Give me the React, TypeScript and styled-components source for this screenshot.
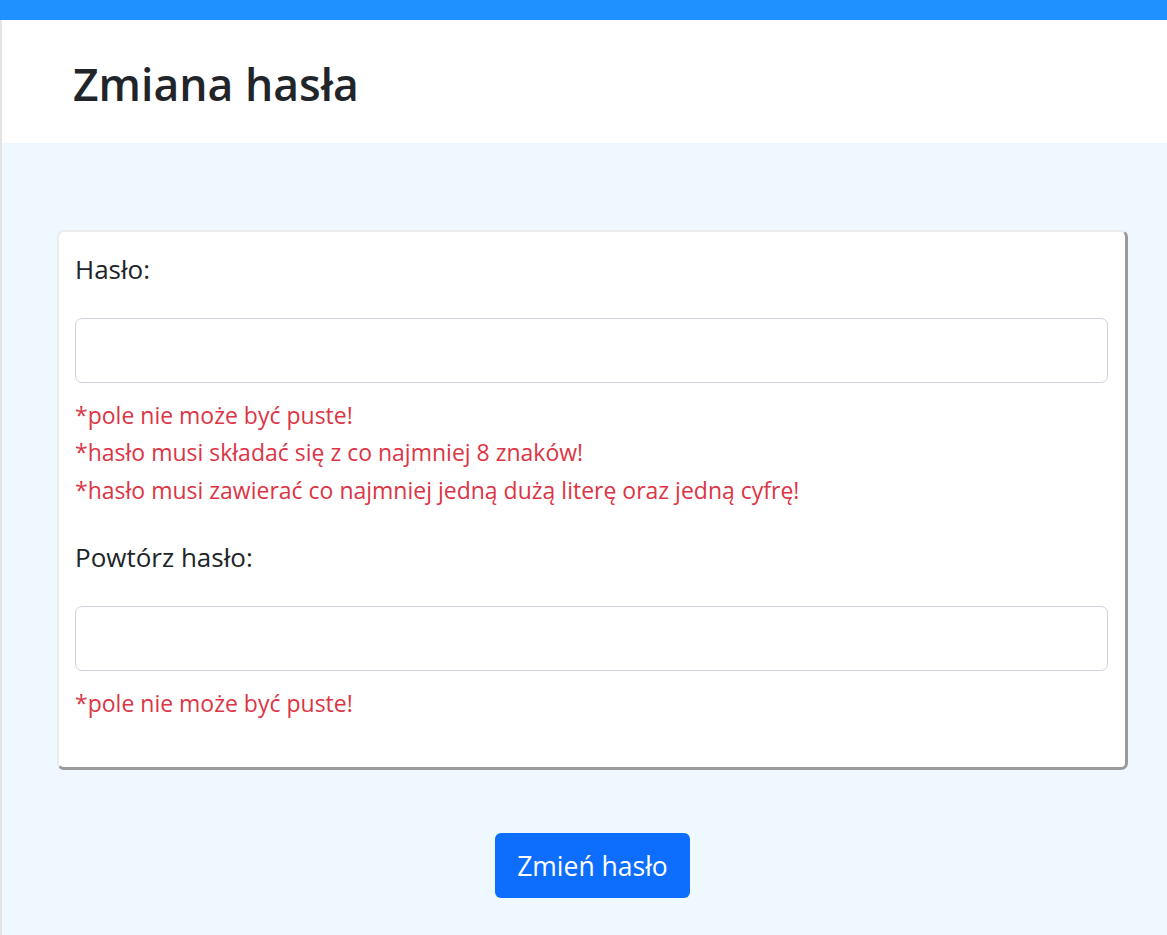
import React, { useState } from 'react'
import styled, { createGlobalStyle } from 'styled-components'

const GlobalStyle = createGlobalStyle`
  html, body {
    margin: 0;
    padding: 0;
    background: #ffffff;
  }
  body {
    font-family: "Open Sans", "Noto Sans", "Liberation Sans", sans-serif;
    color: #212529;
  }
  * {
    box-sizing: border-box;
  }
`

const TopBar = styled.div`
  height: 20px;
  background: #1e90ff;
`

const Page = styled.div`
  border-left: 2px solid #e4e4e4;
  min-height: 915px;
  display: flex;
  flex-direction: column;
`

const Header = styled.header`
  background: #ffffff;
  height: 123px;
  padding: 5px 0 0 71px;
  display: flex;
  align-items: center;
`

const Title = styled.h1`
  margin: 0;
  font-size: 44.5px;
  font-weight: 600;
  line-height: 1.2;
  color: #212529;
`

const Main = styled.main`
  flex: 1;
  background: #eff7ff;
  padding: 87px 39px 38px 55px;
  display: flex;
  flex-direction: column;
  align-items: center;
`

const Card = styled.form`
  align-self: stretch;
  background: #ffffff;
  border-top: 2px solid #ececec;
  border-left: 2px solid #ececec;
  border-right: 3px solid #9a9a9a;
  border-bottom: 3px solid #9a9a9a;
  border-radius: 7px;
  padding: 19px 17px 15px 16px;
`

const Field = styled.div`
  margin-bottom: 30px;
`

const Label = styled.label`
  display: block;
  font-size: 26px;
  line-height: 37.5px;
  margin-bottom: 29px;
`

const Input = styled.input`
  display: block;
  width: 100%;
  height: 65px;
  padding: 8px 16px;
  font-family: inherit;
  font-size: 24px;
  color: #212529;
  background: #ffffff;
  border: 1px solid #ced4da;
  border-radius: 7px;
  outline: none;
`

const Errors = styled.div`
  margin-top: 14px;
`

const ErrorLine = styled.div`
  color: #dc3545;
  font-size: 23px;
  line-height: 37.5px;
`

const SubmitButton = styled.button`
  margin-top: 63px;
  height: 65px;
  padding: 0 22px;
  background: #0d6efd;
  color: #ffffff;
  border: none;
  border-radius: 6px;
  font-family: inherit;
  font-size: 26.5px;
  cursor: pointer;
`

const App = () => {
  const [password, setPassword] = useState('')
  const [repeat, setRepeat] = useState('')

  return (
    <>
      <GlobalStyle />
      <TopBar />
      <Page>
        <Header>
          <Title>Zmiana hasła</Title>
        </Header>
        <Main>
          <Card onSubmit={e => e.preventDefault()}>
            <Field>
              <Label htmlFor="password">Hasło:</Label>
              <Input
                id="password"
                type="password"
                value={password}
                onChange={e => setPassword(e.target.value)}
              />
              <Errors>
                <ErrorLine>*pole nie może być puste!</ErrorLine>
                <ErrorLine>*hasło musi składać się z co najmniej 8 znaków!</ErrorLine>
                <ErrorLine>
                  *hasło musi zawierać co najmniej jedną dużą literę oraz jedną cyfrę!
                </ErrorLine>
              </Errors>
            </Field>
            <Field>
              <Label htmlFor="repeat">Powtórz hasło:</Label>
              <Input
                id="repeat"
                type="password"
                value={repeat}
                onChange={e => setRepeat(e.target.value)}
              />
              <Errors>
                <ErrorLine>*pole nie może być puste!</ErrorLine>
              </Errors>
            </Field>
          </Card>
          <SubmitButton type="button">Zmień hasło</SubmitButton>
        </Main>
      </Page>
    </>
  )
}

export default App
